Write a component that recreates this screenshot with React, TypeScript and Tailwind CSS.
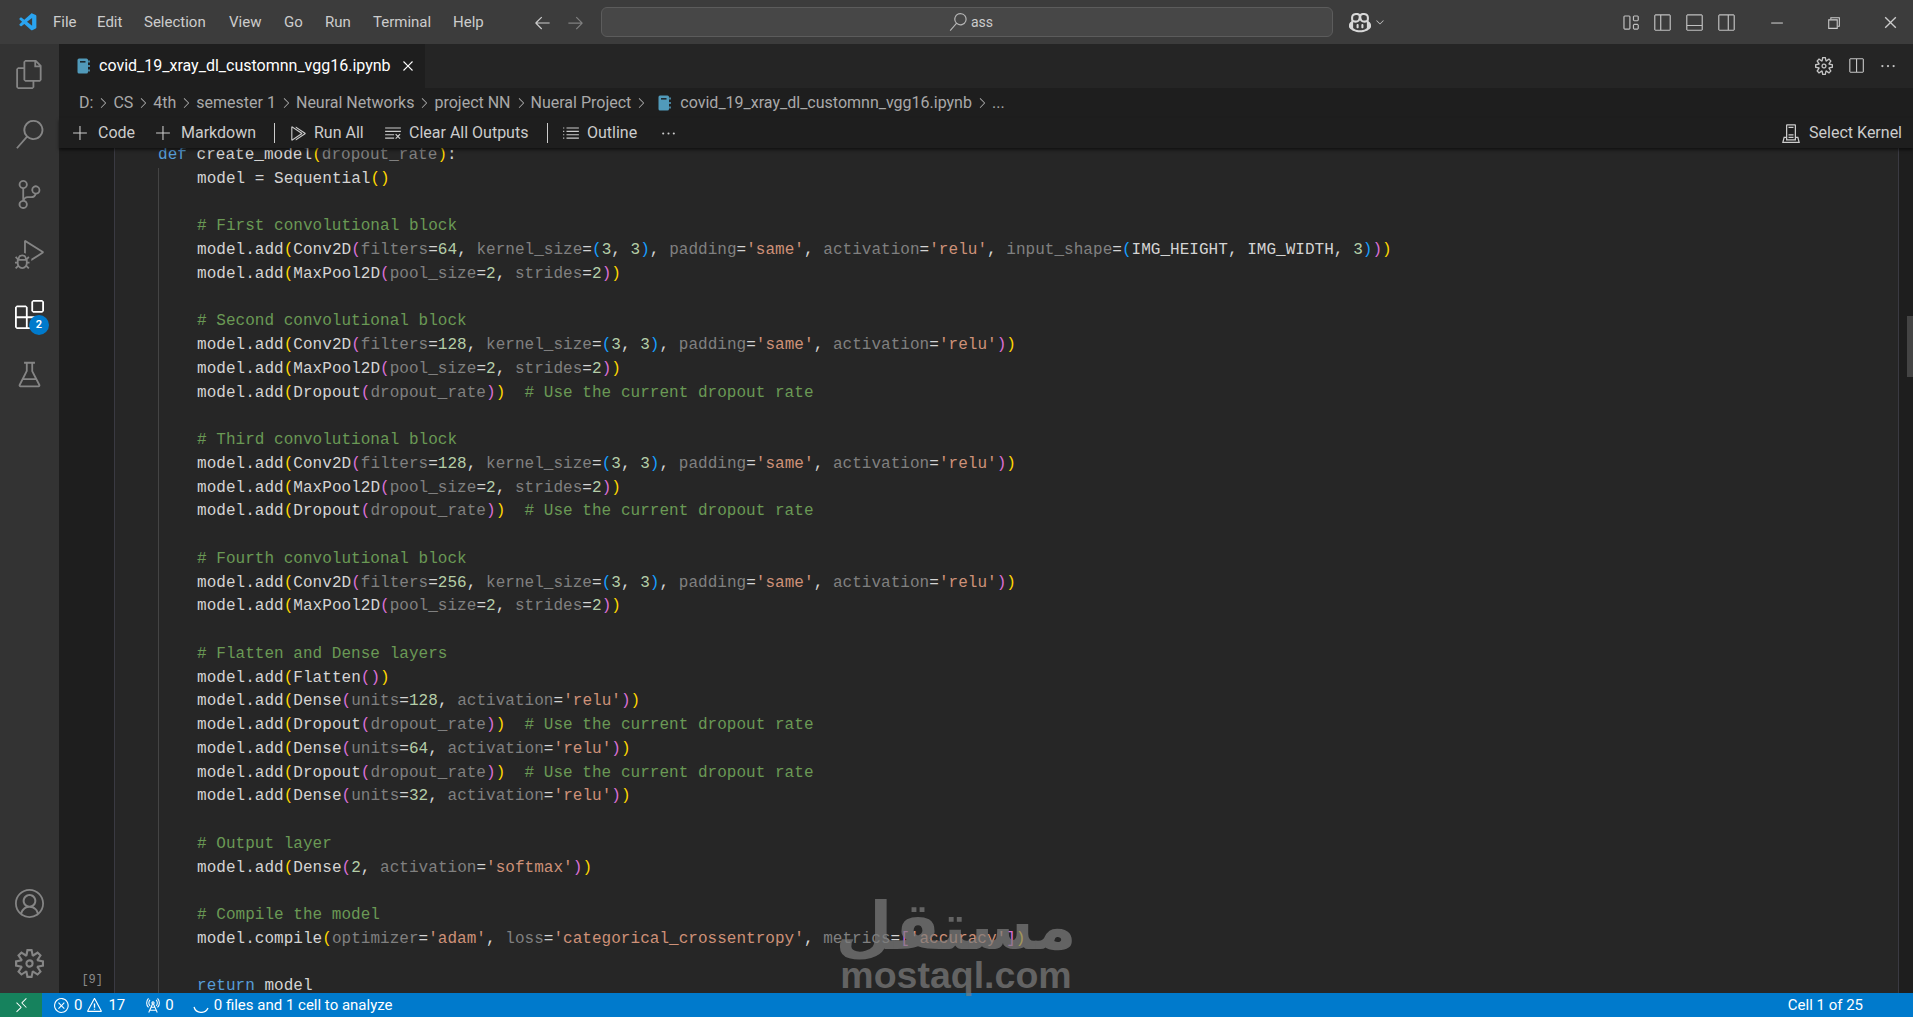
import React from "react";
import {
  VscAccount, VscAdd, VscArrowLeft, VscArrowRight, VscBeaker, VscChevronDown, VscChevronRight,
  VscChromeClose, VscChromeMinimize, VscChromeRestore, VscClearAll, VscClose, VscCopilot, VscDebugAlt,
  VscEllipsis, VscError, VscExtensions, VscFiles, VscLayout, VscLayoutPanelOff, VscLayoutSidebarLeftOff,
  VscLayoutSidebarRightOff, VscListUnordered, VscRadioTower, VscRemote, VscRunAll, VscSearch,
  VscServerEnvironment, VscSettingsGear, VscSourceControl, VscSplitHorizontal, VscVscode, VscWarning,
} from "react-icons/vsc";

const uiFont = "font-['Roboto','Noto_Sans',sans-serif]";

const menuItems = [
  { label: "File", w: "w-[44px]" },
  { label: "Edit", w: "w-[47px]" },
  { label: "Selection", w: "w-[85px]" },
  { label: "View", w: "w-[55px]" },
  { label: "Go", w: "w-[41px]" },
  { label: "Run", w: "w-[48px]" },
  { label: "Terminal", w: "w-[80px]" },
  { label: "Help", w: "w-[50px]" },
];

const crumbs = ["D:", "CS", "4th", "semester 1", "Neural Networks", "project NN", "Nueral Project"];

const bodyLines = [
  "model = Sequential()",
  "",
  "# First convolutional block",
  "model.add(Conv2D(filters=64, kernel_size=(3, 3), padding='same', activation='relu', input_shape=(IMG_HEIGHT, IMG_WIDTH, 3)))",
  "model.add(MaxPool2D(pool_size=2, strides=2))",
  "",
  "# Second convolutional block",
  "model.add(Conv2D(filters=128, kernel_size=(3, 3), padding='same', activation='relu'))",
  "model.add(MaxPool2D(pool_size=2, strides=2))",
  "model.add(Dropout(dropout_rate))  # Use the current dropout rate",
  "",
  "# Third convolutional block",
  "model.add(Conv2D(filters=128, kernel_size=(3, 3), padding='same', activation='relu'))",
  "model.add(MaxPool2D(pool_size=2, strides=2))",
  "model.add(Dropout(dropout_rate))  # Use the current dropout rate",
  "",
  "# Fourth convolutional block",
  "model.add(Conv2D(filters=256, kernel_size=(3, 3), padding='same', activation='relu'))",
  "model.add(MaxPool2D(pool_size=2, strides=2))",
  "",
  "# Flatten and Dense layers",
  "model.add(Flatten())",
  "model.add(Dense(units=128, activation='relu'))",
  "model.add(Dropout(dropout_rate))  # Use the current dropout rate",
  "model.add(Dense(units=64, activation='relu'))",
  "model.add(Dropout(dropout_rate))  # Use the current dropout rate",
  "model.add(Dense(units=32, activation='relu'))",
  "",
  "# Output layer",
  "model.add(Dense(2, activation='softmax'))",
  "",
  "# Compile the model",
  "model.compile(optimizer='adam', loss='categorical_crossentropy', metrics=['accuracy'])",
  "",
  "return model",
];

const bracketColors = ["text-[#ffd700]", "text-[#da70d6]", "text-[#179fff]"];

// tiny tokenizer, just enough for the python in this cell
function highlight(line: string) {
  const out: React.ReactNode[] = [];
  const re = /(#.*$)|('[^']*')|([A-Za-z_][A-Za-z0-9_]*)|(\d+)|([()\[\]])|(\s+|.)/g;
  let depth = 0;
  let m: RegExpExecArray | null;
  let i = 0;
  while ((m = re.exec(line))) {
    let cls = "text-[#d4d4d4]";
    if (m[1]) cls = "text-[#6a9955]";
    else if (m[2]) cls = "text-[#ce9178]";
    else if (m[3]) {
      const next = line.slice(re.lastIndex);
      if (m[3] === "def" || m[3] === "return") cls = "text-[#569cd6]";
      else if (m[3] === "dropout_rate" || (depth > 0 && next.startsWith("="))) cls = "text-[#808080]";
    } else if (m[4]) cls = "text-[#b5cea8]";
    else if (m[5]) {
      if ("([".includes(m[5])) {
        cls = bracketColors[depth % 3];
        depth++;
      } else {
        depth--;
        cls = bracketColors[depth % 3];
      }
    }
    out.push(<span key={i++} className={cls}>{m[0]}</span>);
  }
  return out;
}

const CodeLine: React.FC<{ text: string }> = ({ text }) => (
  <div className="h-[23.76px] whitespace-pre">{text ? highlight(text) : " "}</div>
);

const NotebookIcon: React.FC = () => (
  <svg viewBox="0 0 13 16" className="h-[16px] w-[13px] shrink-0">
    <rect x="0.5" y="0.5" width="10.5" height="15" rx="1.5" fill="#519aba" />
    <rect x="3" y="3" width="5.5" height="1.6" fill="#1e2a30" />
    <rect x="11.2" y="2.5" width="1.6" height="2" fill="#519aba" />
    <rect x="11.2" y="7" width="1.6" height="2" fill="#519aba" />
    <rect x="11.2" y="11.5" width="1.6" height="2" fill="#519aba" />
  </svg>
);

const ActivityIcon: React.FC<{ icon: React.ReactNode; badge?: string; active?: boolean }> = ({ icon, badge, active }) => (
  <div className={`relative flex h-[60px] items-center justify-center text-[29px] ${active ? "text-white" : "text-[#858585]"}`}>
    {icon}
    {badge && (
      <span className="absolute left-[29px] top-[31px] flex h-5 w-5 items-center justify-center rounded-full bg-[#007acc] text-[11px] font-semibold text-white">
        {badge}
      </span>
    )}
  </div>
);

const ToolButton: React.FC<{ icon: React.ReactNode; label: string; className: string }> = ({ icon, label, className }) => (
  <div className={`flex items-center ${className}`}>
    {icon}
    <span>{label}</span>
  </div>
);

export default function App() {
  return (
    <div className={`relative flex h-screen w-screen flex-col overflow-hidden bg-[#1e1e1e] ${uiFont}`}>
      {/* title bar */}
      <header className="flex h-11 shrink-0 items-center bg-[#3c3c3c] text-[15px] text-[#cccccc]">
        <div className="flex w-[53px] justify-center pl-[3px]">
          <VscVscode className="text-[21px] text-[#2aa4f0]" />
        </div>
        {menuItems.map((m) => (
          <span key={m.label} className={m.w}>{m.label}</span>
        ))}
        <div className="flex w-[99px] items-center gap-[14px] pl-[30px] text-[19px]">
          <VscArrowLeft className="shrink-0 text-[#cccccc]" />
          <VscArrowRight className="shrink-0 text-[#808080]" />
        </div>
        <div className="ml-[-1px] flex h-[30px] w-[732px] items-center justify-center gap-[4px] rounded-md border border-[#5c5c5c] bg-[#474747] pl-[8px]">
          <VscSearch className="text-[18px] text-[#b5b5b5]" />
          <span className="text-[14px]">ass</span>
        </div>
        <div className="ml-[16px] flex items-center gap-[3px]">
          <VscCopilot className="text-[22px] text-[#d8d8d8]" />
          <VscChevronDown className="text-[12px]" />
        </div>
        <div className="ml-[235px] flex items-center gap-[13px] text-[19px] text-[#c0c0c0]">
          <VscLayout />
          <VscLayoutSidebarLeftOff />
          <VscLayoutPanelOff />
          <VscLayoutSidebarRightOff />
        </div>
        <div className="ml-[32px] flex items-center gap-[40px] text-[17px] text-[#cccccc]">
          <VscChromeMinimize />
          <VscChromeRestore />
          <VscChromeClose />
        </div>
      </header>

      <div className="flex min-h-0 flex-1">
        {/* activity bar */}
        <nav className="flex w-[59px] shrink-0 flex-col justify-between bg-[#333333]">
          <div>
            <ActivityIcon icon={<VscFiles />} />
            <ActivityIcon icon={<VscSearch />} />
            <ActivityIcon icon={<VscSourceControl />} />
            <ActivityIcon icon={<VscDebugAlt />} />
            <ActivityIcon icon={<VscExtensions />} badge="2" active />
            <ActivityIcon icon={<VscBeaker />} />
          </div>
          <div>
            <ActivityIcon icon={<VscAccount />} />
            <ActivityIcon icon={<VscSettingsGear />} />
          </div>
        </nav>

        <main className="flex min-w-0 flex-1 flex-col">
          {/* tabs */}
          <div className="flex h-11 shrink-0 items-center bg-[#252525]">
            <div className="flex h-full w-[366px] items-center bg-[#1e1e1e] pl-[18px] text-[16px] text-white">
              <NotebookIcon />
              <span className="ml-[9px] w-[291px] shrink-0">covid_19_xray_dl_customnn_vgg16.ipynb</span>
              <VscClose className="ml-[9px] text-[18px]" />
            </div>
            <div className="ml-auto flex items-center gap-[14px] pr-[16px] text-[#c5c5c5]">
              <VscSettingsGear className="text-[18px]" />
              <VscSplitHorizontal className="text-[18px]" />
              <VscEllipsis className="text-[18px]" />
            </div>
          </div>

          {/* breadcrumbs */}
          <div className="flex h-[30px] shrink-0 items-center bg-[#1e1e1e] pl-[20px] text-[16px] text-[#a9a9a9]">
            {crumbs.map((c) => (
              <React.Fragment key={c}>
                <span>{c}</span>
                <VscChevronRight className="mx-[2px] text-[16px]" />
              </React.Fragment>
            ))}
            <span className="ml-[7px]">
              <NotebookIcon />
            </span>
            <span className="ml-[9px]">covid_19_xray_dl_customnn_vgg16.ipynb</span>
            <VscChevronRight className="mx-[2px] text-[16px]" />
            <span>...</span>
          </div>

          {/* notebook toolbar */}
          <div className="relative z-10 flex h-[30px] shrink-0 items-center bg-[#1e1e1e] pl-[13px] pr-[11px] text-[16px] text-[#cccccc] shadow-[0_2px_3px_rgba(0,0,0,0.55)]">
            <ToolButton icon={<VscAdd className="mr-[9px] text-[17px]" />} label="Code" className="w-[83px]" />
            <ToolButton icon={<VscAdd className="mr-[9px] text-[17px]" />} label="Markdown" className="w-[119px]" />
            <div className="h-[20px] w-px bg-[#cccccc]" />
            <ToolButton icon={<VscRunAll className="ml-[14px] mr-[7px] text-[18px]" />} label="Run All" className="w-[109px]" />
            <ToolButton icon={<VscClearAll className="mr-[7px] text-[18px]" />} label="Clear All Outputs" className="w-[163px]" />
            <div className="h-[20px] w-px bg-[#cccccc]" />
            <ToolButton icon={<VscListUnordered className="ml-[14px] mr-[7px] text-[18px]" />} label="Outline" className="w-[112px]" />
            <VscEllipsis className="text-[17px]" />
            <ToolButton icon={<VscServerEnvironment className="mr-[8px] text-[20px]" />} label="Select Kernel" className="ml-auto" />
          </div>

          {/* cell */}
          <div className="flex min-h-0 flex-1">
            <div className="flex w-[55px] shrink-0 items-end justify-end pb-[4px] pr-[11px] font-['Liberation_Mono',monospace] text-[12px] text-[#8a8a8a]">
              [9]
            </div>
            <div className="min-w-0 flex-1 overflow-hidden border-x border-[#3a3a42] bg-[#262626] pl-[43px] font-['Liberation_Mono',monospace] text-[16px] leading-[23.76px] tracking-[0.03px]">
              <div className="-mt-[4px]">
                <CodeLine text="def create_model(dropout_rate):" />
                <div className="border-l border-[#444444] pl-[38px]">
                  {bodyLines.map((l, i) => (
                    <CodeLine key={i} text={l} />
                  ))}
                </div>
              </div>
            </div>
            <div className="relative w-[14px] shrink-0 bg-[#1e1e1e]">
              <div className="absolute right-0 top-[168px] h-[61px] w-[6px] bg-[#444444]" />
            </div>
          </div>
        </main>
      </div>

      {/* status bar */}
      <footer className="flex h-6 shrink-0 items-center bg-[#007acc] text-[15px] text-white">
        <div className="flex h-full w-[42px] items-center justify-center bg-[#16825d]">
          <VscRemote className="text-[17px]" />
        </div>
        <VscError className="ml-[11px] text-[17px]" />
        <span className="ml-[4px]">0</span>
        <VscWarning className="ml-[4px] text-[17px]" />
        <span className="ml-[5px]">17</span>
        <VscRadioTower className="ml-[19px] text-[17px]" />
        <span className="ml-[4px]">0</span>
        <svg viewBox="0 0 16 16" className="ml-[19px] h-[16px] w-[16px] text-white" fill="none" stroke="currentColor" strokeWidth="1.3">
          <path d="M1 10 A7.5 7.5 0 0 0 15 11" />
        </svg>
        <span className="ml-[5px]">0 files and 1 cell to analyze</span>
        <span className="ml-auto mr-[50px]">Cell 1 of 25</span>
      </footer>

      {/* watermark */}
      <div className="pointer-events-none absolute bottom-[23px] left-[840px] flex w-[232px] flex-col items-center whitespace-nowrap text-[#7d7d7d] opacity-70">
        <span dir="rtl" className="font-['DejaVu_Sans',sans-serif] text-[66px] font-bold leading-[58px]">مستقل</span>
        <span className="font-['Liberation_Sans',sans-serif] text-[37.5px] font-bold leading-[38px]">mostaql.com</span>
      </div>
    </div>
  );
}
